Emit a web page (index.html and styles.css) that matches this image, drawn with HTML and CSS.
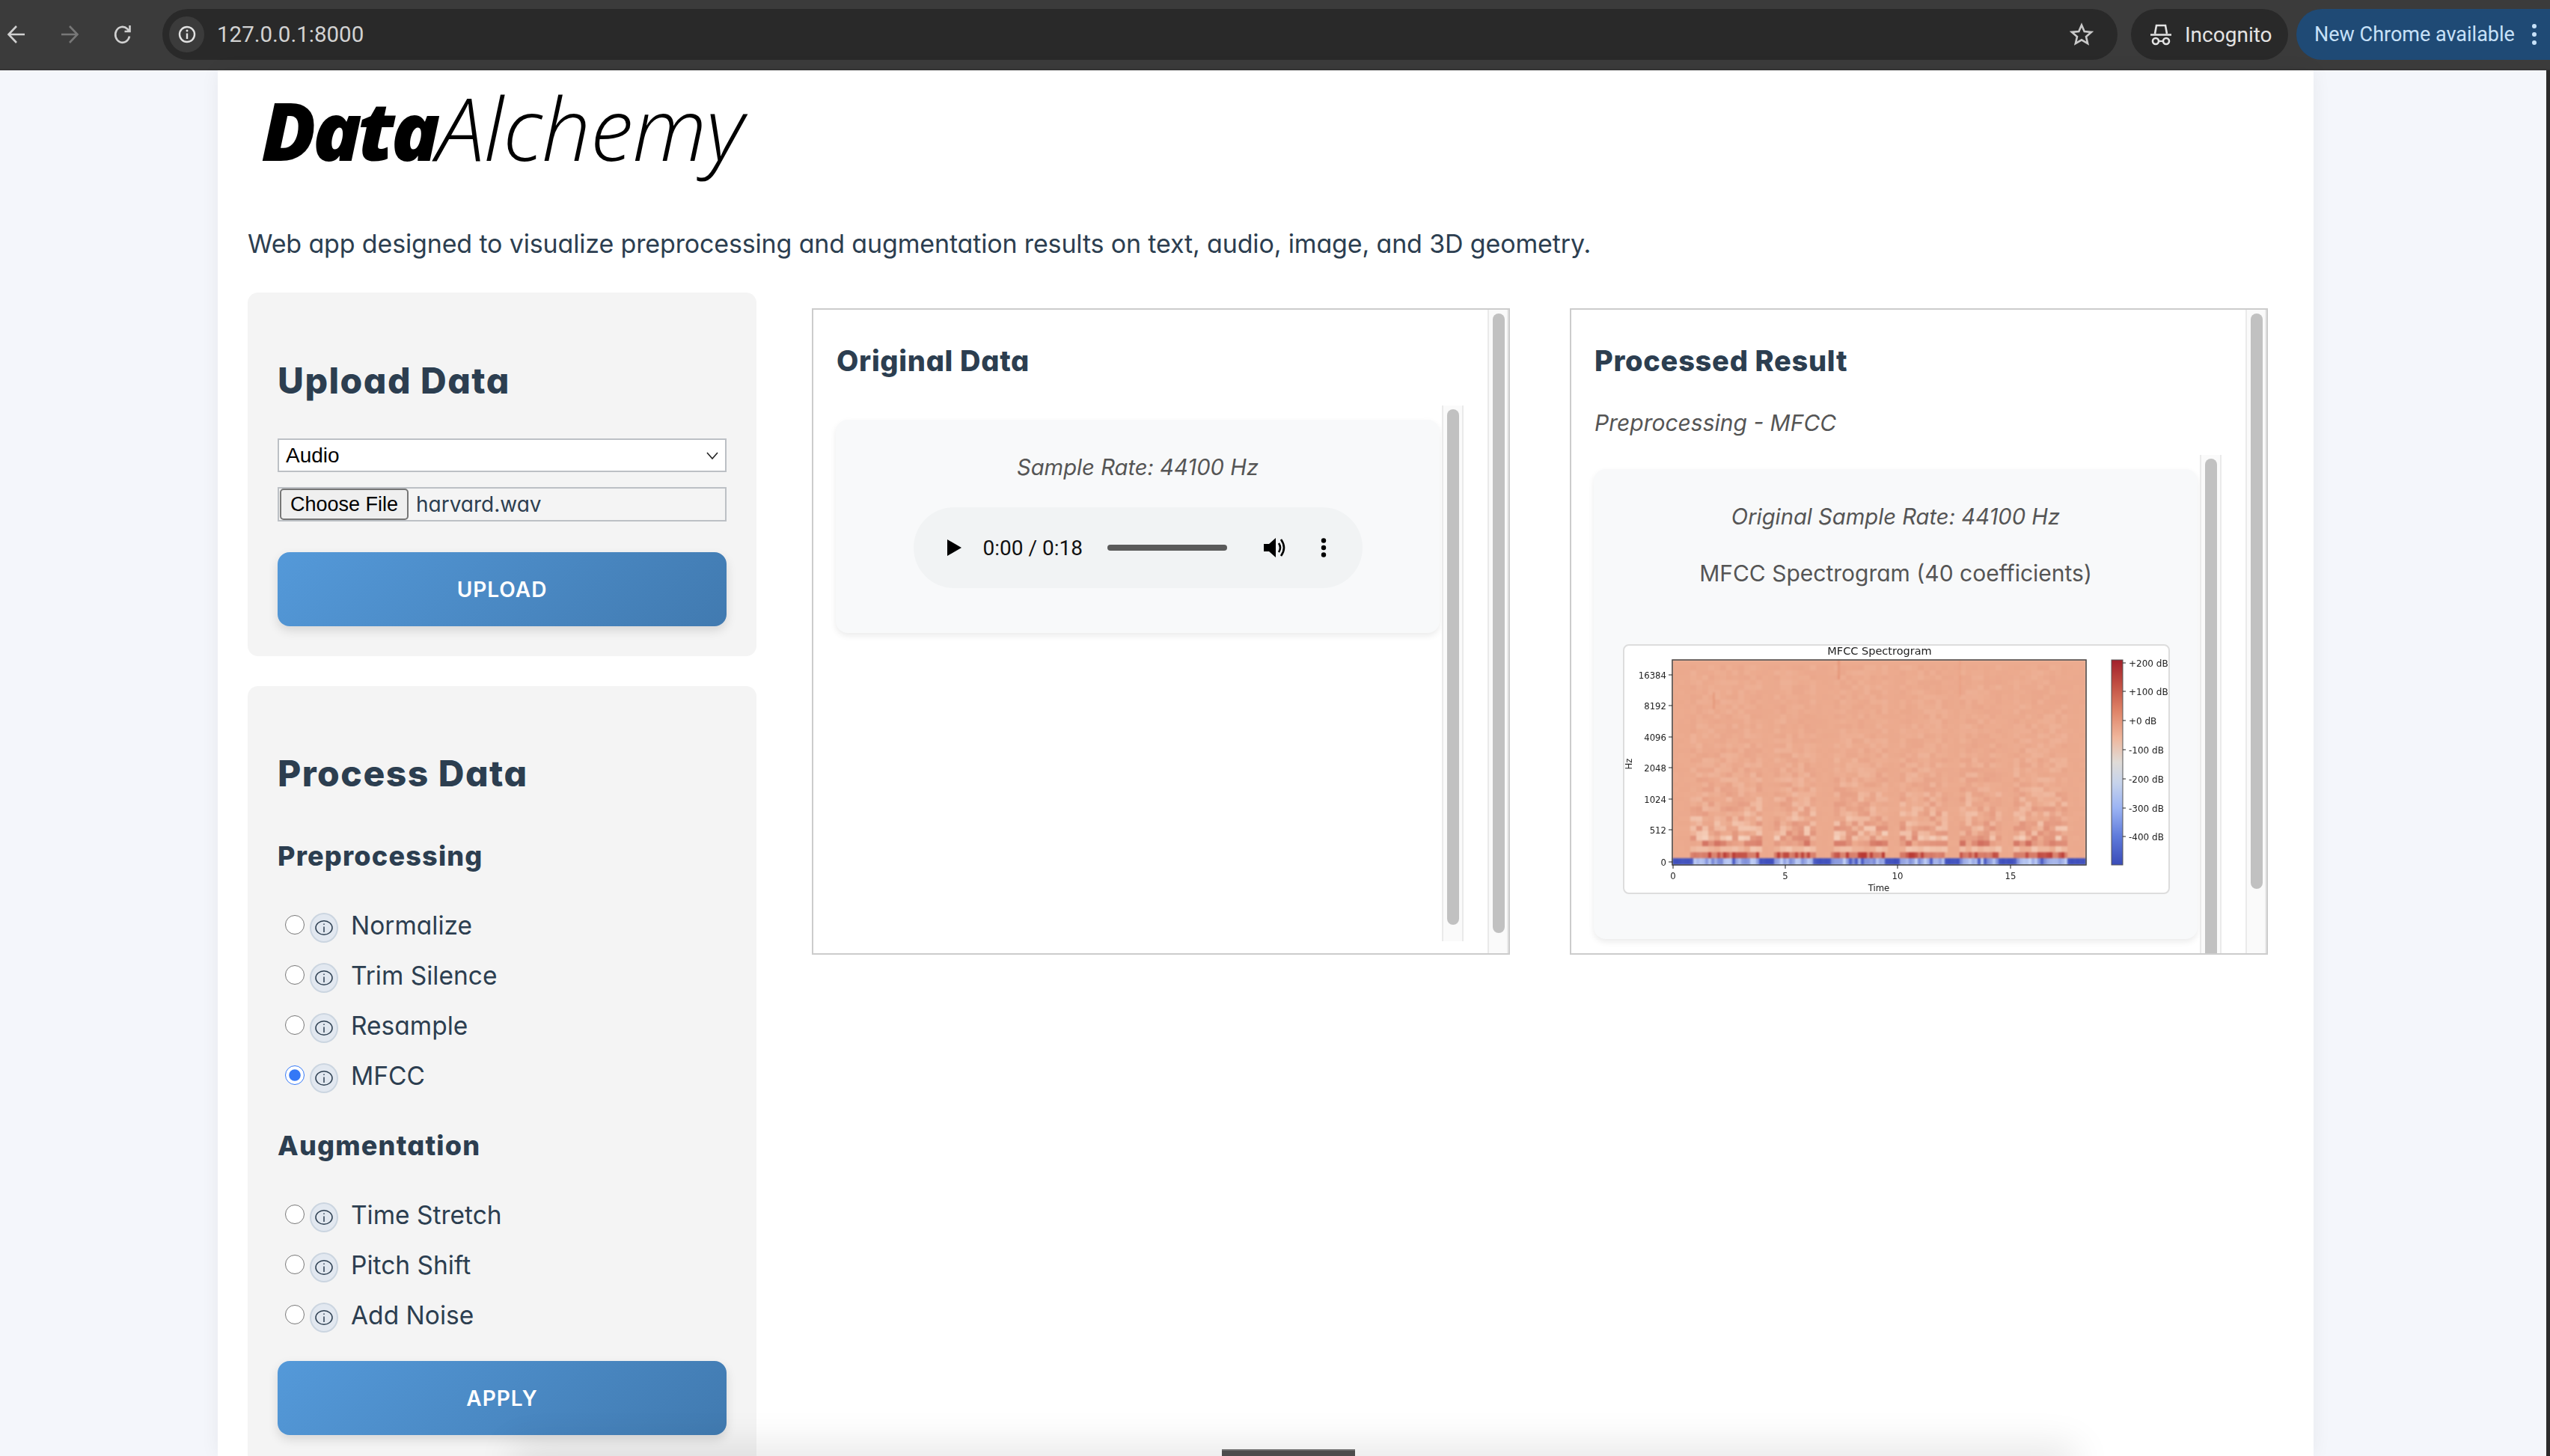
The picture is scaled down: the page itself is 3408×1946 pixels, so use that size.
FILE: index.html
```html
<!DOCTYPE html>
<html lang="en">
<head>
    <meta charset="UTF-8">
    <meta name="viewport" content="width=device-width, initial-scale=1.0">
    <title>DataAlchemy</title>
    <link rel="stylesheet" href="styles.css">
</head>
<body>
    <header class="toolbar">
        <div class="nav-icons">
            <svg class="nav-icon" viewBox="0 0 26 32"><path d="M24 16H3M13 5 2.500 16 13 27" /></svg>
            <svg class="nav-icon dim" viewBox="0 0 26 32"><path d="M2 16h21M13 5l10.500 11L13 27" /></svg>
            <svg class="nav-icon" viewBox="0 0 26 32"><path d="M22 18.500A9.500 10.500 0 1 1 19 8.500l3 3.500M22.500 4v8h-7" /></svg>
        </div>
        <div class="url-pill">
            <span class="site-chip">
                <svg viewBox="0 0 26 26" width="26" height="26"><circle cx="13" cy="13" r="10" fill="none" stroke="#e2e2e2" stroke-width="2.400" /><path d="M13 11.500V19" stroke="#e2e2e2" stroke-width="2.400" /><circle cx="13" cy="8" r="1.500" fill="#e2e2e2" /></svg>
            </span>
            <span class="url-text">127.0.0.1:8000</span>
            <svg class="star" viewBox="0 0 32 32" width="32" height="32"><path d="M16 3.500l3.700 8.600 9.300.8-7 6.100 2.100 9.100-8.100-4.800-8.100 4.800 2.100-9.100-7-6.100 9.300-.8z" fill="none" stroke="#c9c9c9" stroke-width="2.600" /></svg>
        </div>
        <div class="incognito-pill">
            <svg viewBox="0 0 32 32" width="32" height="32"><path d="M8 15 10 4h12l2 11M2 16.500h28" fill="none" stroke="#e3e3e3" stroke-width="2.600" /><circle cx="9" cy="25" r="4" fill="none" stroke="#e3e3e3" stroke-width="2.600" /><circle cx="23" cy="25" r="4" fill="none" stroke="#e3e3e3" stroke-width="2.600" /><path d="M13 25h6" stroke="#e3e3e3" stroke-width="2.200" /></svg>
            <span>Incognito</span>
        </div>
        <div class="update-pill">
            <span>New Chrome available</span>
            <svg viewBox="0 0 8 30" width="8" height="30"><circle cx="4" cy="4" r="3" /><circle cx="4" cy="15" r="3" /><circle cx="4" cy="26" r="3" /></svg>
        </div>
    </header>

    <div class="viewport">
        <main class="container">
            <h1 class="logo"><strong>Data</strong><span>Alchemy</span></h1>
            <p class="intro">Web app designed to visualize preprocessing and augmentation results on text, audio, image, and 3D geometry.</p>

            <div class="layout">
                <aside class="sidebar">
                    <section class="side-card upload-card">
                        <h2>Upload Data</h2>
                        <div class="select-box">
                            <span>Audio</span>
                            <svg viewBox="0 0 16 10" width="16" height="10"><path d="M1 1l7 8 7-8" fill="none" stroke="#222" stroke-width="1.600" /></svg>
                        </div>
                        <div class="file-box">
                            <button type="button" class="file-btn">Choose File</button>
                            <span class="file-name">harvard.wav</span>
                        </div>
                        <button type="button" class="action-btn upload-btn">UPLOAD</button>
                    </section>

                    <section class="side-card process-card">
                        <h2>Process Data</h2>
                        <h3>Preprocessing</h3>
                        <div class="options">
                            <label class="option"><input type="radio" name="op"><span class="info"><svg viewBox="0 0 24 20" width="24" height="20"><ellipse cx="12" cy="10" rx="11" ry="9.200" /><path d="M12 8.500V16M12 4.500v1.500" /></svg></span><span class="opt-label">Normalize</span></label>
                            <label class="option"><input type="radio" name="op"><span class="info"><svg viewBox="0 0 24 20" width="24" height="20"><ellipse cx="12" cy="10" rx="11" ry="9.200" /><path d="M12 8.500V16M12 4.500v1.500" /></svg></span><span class="opt-label">Trim Silence</span></label>
                            <label class="option"><input type="radio" name="op"><span class="info"><svg viewBox="0 0 24 20" width="24" height="20"><ellipse cx="12" cy="10" rx="11" ry="9.200" /><path d="M12 8.500V16M12 4.500v1.500" /></svg></span><span class="opt-label">Resample</span></label>
                            <label class="option"><input type="radio" name="op" checked><span class="info"><svg viewBox="0 0 24 20" width="24" height="20"><ellipse cx="12" cy="10" rx="11" ry="9.200" /><path d="M12 8.500V16M12 4.500v1.500" /></svg></span><span class="opt-label">MFCC</span></label>
                        </div>
                        <h3 class="aug-title">Augmentation</h3>
                        <div class="options">
                            <label class="option"><input type="radio" name="op"><span class="info"><svg viewBox="0 0 24 20" width="24" height="20"><ellipse cx="12" cy="10" rx="11" ry="9.200" /><path d="M12 8.500V16M12 4.500v1.500" /></svg></span><span class="opt-label">Time Stretch</span></label>
                            <label class="option"><input type="radio" name="op"><span class="info"><svg viewBox="0 0 24 20" width="24" height="20"><ellipse cx="12" cy="10" rx="11" ry="9.200" /><path d="M12 8.500V16M12 4.500v1.500" /></svg></span><span class="opt-label">Pitch Shift</span></label>
                            <label class="option"><input type="radio" name="op"><span class="info"><svg viewBox="0 0 24 20" width="24" height="20"><ellipse cx="12" cy="10" rx="11" ry="9.200" /><path d="M12 8.500V16M12 4.500v1.500" /></svg></span><span class="opt-label">Add Noise</span></label>
                        </div>
                        <button type="button" class="action-btn apply-btn">APPLY</button>
                    </section>
                </aside>

                <section class="panels">
                    <div class="panel">
                        <div class="panel-body">
                            <h3 class="panel-title">Original Data</h3>
                            <div class="scroller">
                                <div class="result-card">
                                    <p class="meta">Sample Rate: 44100 Hz</p>
                                    <div class="audio">
                                        <svg class="play" viewBox="0 0 19 22" width="19" height="22"><path d="M0 0l19 11L0 22z" /></svg>
                                        <span class="time">0:00 / 0:18</span>
                                        <span class="progress"></span>
                                        <svg class="volume" viewBox="0 0 31 28" width="31" height="28"><path d="M0 9h7l9-8v26l-9-8H0z" /><path d="M20 8q4 6 0 12M23 3q8 11 0 22" fill="none" stroke="#000" stroke-width="2.600" /></svg>
                                        <svg class="dots" viewBox="0 0 8 26" width="8" height="26"><circle cx="4" cy="3.500" r="3.200" /><circle cx="4" cy="13" r="3.200" /><circle cx="4" cy="22.500" r="3.200" /></svg>
                                    </div>
                                </div>
                                <div class="track inner-track"><div class="thumb thumb-inner-a"></div></div>
                            </div>
                        </div>
                        <div class="track"><div class="thumb thumb-outer-a"></div></div>
                    </div>

                    <div class="panel">
                        <div class="panel-body">
                            <h3 class="panel-title">Processed Result</h3>
                            <p class="sub-title">Preprocessing - MFCC</p>
                            <div class="scroller scroller-result">
                                <div class="result-card">
                                    <p class="meta">Original Sample Rate: 44100 Hz</p>
                                    <p class="meta plain">MFCC Spectrogram (40 coefficients)</p>
                                    <div class="chart">
                                        <canvas id="heatmap" class="heatmap" width="553" height="274"></canvas>
                                        <svg class="chart-axes" viewBox="0 0 727 330" width="727" height="330">
                                            <defs>
                                                <linearGradient id="coolwarm" x1="0" y1="0" x2="0" y2="1">
                                                    <stop offset="0" stop-color="#a2202b" />
                                                    <stop offset="0.12" stop-color="#c14f43" />
                                                    <stop offset="0.25" stop-color="#df8468" />
                                                    <stop offset="0.38" stop-color="#efb69c" />
                                                    <stop offset="0.5" stop-color="#dfdbd7" />
                                                    <stop offset="0.6" stop-color="#c6d3eb" />
                                                    <stop offset="0.72" stop-color="#9cb4f3" />
                                                    <stop offset="0.86" stop-color="#5f7bdb" />
                                                    <stop offset="1" stop-color="#3a4cb8" />
                                                </linearGradient>
                                            </defs>
                                            <rect class="axis-box" x="64" y="19" width="553" height="274" />
                                            <rect x="651" y="19" width="15" height="274" fill="url(#coolwarm)" stroke="#555" />
                                            <path class="ticks" d="M59 39h5M59 80h5M59 122h5M59 163h5M59 205h5M59 246h5M59 289h5M65 293v5M215 293v5M365 293v5M516 293v5M666 23h4M666 61h4M666 100h4M666 139h4M666 178h4M666 217h4M666 255h4" />
                                            <text class="plot-title" x="341" y="12">MFCC Spectrogram</text>
                                            <text class="tick-y" x="56" y="44">16384</text>
                                            <text class="tick-y" x="56" y="85">8192</text>
                                            <text class="tick-y" x="56" y="127">4096</text>
                                            <text class="tick-y" x="56" y="168">2048</text>
                                            <text class="tick-y" x="56" y="210">1024</text>
                                            <text class="tick-y" x="56" y="251">512</text>
                                            <text class="tick-y" x="56" y="294">0</text>
                                            <text class="tick-x" x="65" y="312">0</text>
                                            <text class="tick-x" x="215" y="312">5</text>
                                            <text class="tick-x" x="365" y="312">10</text>
                                            <text class="tick-x" x="516" y="312">15</text>
                                            <text class="tick-x" x="340" y="328">Time</text>
                                            <text class="tick-x" transform="translate(10 158) rotate(-90)">Hz</text>
                                            <text class="tick-bar" x="674" y="28">+200 dB</text>
                                            <text class="tick-bar" x="674" y="66">+100 dB</text>
                                            <text class="tick-bar" x="674" y="105">+0 dB</text>
                                            <text class="tick-bar" x="674" y="144">-100 dB</text>
                                            <text class="tick-bar" x="674" y="183">-200 dB</text>
                                            <text class="tick-bar" x="674" y="222">-300 dB</text>
                                            <text class="tick-bar" x="674" y="260">-400 dB</text>
                                        </svg>
                                    </div>
                                </div>
                                <div class="track inner-track"><div class="thumb thumb-inner-b"></div></div>
                            </div>
                        </div>
                        <div class="track"><div class="thumb thumb-outer-b"></div></div>
                    </div>
                </section>
            </div>
        </main>
        <div class="window-edge"></div>
    </div>

    <div class="bottom-shade"></div>
    <div class="bottom-tab"></div>

    <script src="script.js"></script>
</body>
</html>
```

FILE: styles.css
```css
html, body {
    margin: 0;
    height: 1946px;
    overflow: hidden;
}
body {
    position: relative;
    background: #f4f6fb;
    font-family: Inter, "Liberation Sans", sans-serif;
    font-feature-settings: "cv11";
    color: #2c3e50;
}

/* browser chrome */
.toolbar {
    display: flex;
    height: 94px;
    box-sizing: border-box;
    padding-top: 12px;
    background: #3b3b3b;
    border-bottom: 2px solid #363636;
    font-family: Roboto, sans-serif;
    font-size: 27px;
    font-feature-settings: normal;
}
.nav-icons {
    display: flex;
    align-items: center;
    gap: 45px;
    height: 68px;
    padding-left: 9px;
    margin-right: 40px;
}
.nav-icon {
    width: 26px;
    height: 32px;
    fill: none;
    stroke: #d0d0d0;
    stroke-width: 2.6;
}
.nav-icon.dim {
    stroke: #777;
}
.url-pill {
    flex: 1;
    display: flex;
    align-items: center;
    height: 68px;
    padding: 0 32px 0 9px;
    border-radius: 34px;
    background: #292929;
    color: #d2d2d2;
}
.site-chip {
    display: flex;
    align-items: center;
    justify-content: center;
    width: 47px;
    height: 48px;
    border-radius: 50%;
    background: #3b3b3b;
}
.url-text {
    flex: 1;
    margin-left: 17px;
    font-size: 29.500px;
}
.incognito-pill {
    display: flex;
    align-items: center;
    gap: 16px;
    width: 210px;
    height: 68px;
    box-sizing: border-box;
    margin-left: 18px;
    padding-left: 24px;
    border-radius: 34px;
    background: #292929;
    color: #e3e3e3;
    font-size: 28px;
}
.update-pill {
    display: flex;
    align-items: center;
    gap: 22px;
    width: 339px;
    height: 68px;
    flex: none;
    box-sizing: border-box;
    margin-left: 11px;
    padding-left: 24px;
    border-radius: 34px 0 0 34px;
    background: #1f4a75;
    color: #c7e1f8;
    fill: #c7e1f8;
}

/* page */
.viewport {
    display: flex;
    height: 1852px;
}
.container {
    width: 2801px;
    margin-left: 291px;
    margin-right: 311px;
    padding: 11px 0 0 40px;
    box-sizing: border-box;
    background: #fff;
    box-shadow: 0 0 24px rgba(0, 0, 0, 0.06);
}
.window-edge {
    width: 5px;
    background: #2b2b2b;
}
.logo {
    height: 130px;
    margin: 0;
    padding-left: 18px;
    font-family: "Open Sans", sans-serif;
    font-size: 108px;
    line-height: 130px;
    font-style: italic;
    font-weight: 300;
    color: #000;
    font-feature-settings: normal;
}
.logo strong {
    font-weight: 800;
    letter-spacing: -5px;
}
.logo span {
    font-size: 116px;
    letter-spacing: -0.7px;
}
.intro {
    margin: 66px 0 40px;
    font-size: 34px;
    line-height: 50px;
    letter-spacing: -0.15px;
}
.layout {
    display: flex;
    gap: 74px;
}

/* sidebar */
.sidebar {
    width: 680px;
    flex: none;
}
.side-card {
    padding: 0 40px 40px;
    border-radius: 14px;
    background: #f4f4f4;
}
.upload-card {
    padding-top: 88px;
    margin-bottom: 40px;
}
.process-card {
    padding-top: 87px;
}
.side-card h2 {
    margin: 0;
    font-size: 48px;
    line-height: 60px;
    font-weight: 800;
    letter-spacing: 1.500px;
}
.side-card h3 {
    margin: 58px 0 40px;
    font-size: 36px;
    line-height: 44px;
    font-weight: 800;
    letter-spacing: 1.200px;
}
.side-card .aug-title {
    margin-top: 35px;
}
.select-box {
    display: flex;
    align-items: center;
    justify-content: space-between;
    height: 45px;
    box-sizing: border-box;
    margin-top: 47px;
    padding: 0 9px;
    border: 2px solid #bcc0c5;
    background: #fff;
    color: #000;
    font-family: "Liberation Sans", sans-serif;
    font-size: 28px;
    font-feature-settings: normal;
}
.file-box {
    display: flex;
    align-items: center;
    height: 46px;
    box-sizing: border-box;
    margin-top: 20px;
    padding-left: 1px;
    border: 2px solid #bcc0c5;
}
.file-btn {
    width: 172px;
    height: 42px;
    padding: 0;
    border: 2px solid #767676;
    border-radius: 5px;
    background: #efefef;
    color: #000;
    font-family: "Liberation Sans", sans-serif;
    font-size: 27px;
}
.file-name {
    margin-left: 10px;
    font-size: 28px;
}
.action-btn {
    display: block;
    width: 600px;
    height: 99px;
    padding: 0;
    border: 0;
    border-radius: 16px;
    background: linear-gradient(135deg, #5499d9, #417ab0);
    box-shadow: 0 6px 14px rgba(0, 0, 0, 0.12);
    color: #fff;
    font-family: Inter, sans-serif;
    font-size: 28px;
    font-weight: 600;
    letter-spacing: 1px;
}
.upload-btn {
    margin-top: 41px;
}
.apply-btn {
    margin-top: 25px;
}
.option {
    display: flex;
    align-items: center;
    height: 67px;
    font-size: 33.500px;
}
.option input {
    width: 26px;
    height: 26px;
    margin: 0 7px 8px 10px;
    accent-color: #3478f6;
}
.info {
    display: flex;
    align-items: center;
    justify-content: center;
    width: 38px;
    height: 40px;
    box-sizing: border-box;
    border: 2px solid #cbd5e0;
    border-radius: 50%;
    background: #e2e8f0;
}
.info svg {
    fill: none;
    stroke: #2c3e50;
    stroke-width: 1.5;
}
.opt-label {
    margin: 0 0 6px 17px;
}

/* result panels */
.panels {
    display: flex;
    gap: 80px;
    margin-top: 21px;
}
.panel {
    display: flex;
    width: 933px;
    height: 864px;
    box-sizing: border-box;
    border: 2px solid #ccc;
    overflow: hidden;
}
.panel-body {
    flex: 1;
    min-width: 0;
    padding: 45px 32px 0 30px;
}
.panel-title {
    margin: 0 0 37px 1px;
    font-size: 38px;
    line-height: 46px;
    font-weight: 800;
    letter-spacing: 0.700px;
}
.sub-title {
    margin: 0 0 20px 1px;
    font-size: 30px;
    line-height: 46px;
    font-style: italic;
    color: #555;
}
.scroller {
    display: flex;
    height: 716px;
}
.scroller-result {
    height: 700px;
}
.result-card {
    flex: 1;
    align-self: flex-start;
    margin-top: 19px;
    padding: 41px 0 60px;
    border-radius: 16px;
    background: #f8f9fa;
    box-shadow: 0 4px 8px rgba(0, 0, 0, 0.08);
}
.meta {
    margin: 0;
    font-size: 29.200px;
    line-height: 46px;
    font-style: italic;
    text-align: center;
    color: #555;
}
.meta.plain {
    margin-top: 29px;
    font-size: 30px;
    font-style: normal;
}
.track {
    flex: none;
    width: 28px;
    box-sizing: border-box;
    padding: 5px 5px 0;
    border-left: 2px solid #eaeaea;
    border-right: 2px solid #eaeaea;
    background: #fafafa;
}
.inner-track {
    margin-left: 3px;
    box-sizing: border-box;
    width: 29px;
}
.thumb {
    width: 16px;
    border-radius: 8px;
    background: #c1c1c1;
}
.thumb-outer-a { height: 828px; }
.thumb-outer-b { height: 769px; }
.thumb-inner-a { height: 689px; }
.thumb-inner-b { height: 720px; }
.audio {
    display: flex;
    align-items: center;
    width: 600px;
    height: 108px;
    margin: 30px auto 0;
    border-radius: 54px;
    background: #f1f3f4;
}
.play {
    margin-left: 45px;
}
.time {
    width: 133px;
    margin-left: 29px;
    font-family: Roboto, sans-serif;
    font-size: 28px;
    white-space: nowrap;
    color: #111;
    font-feature-settings: normal;
}
.progress {
    width: 160px;
    height: 8px;
    margin-left: 33px;
    border-radius: 4px;
    background: #5a5a5a;
}
.volume {
    margin-left: 49px;
}
.dots {
    margin-left: 45px;
}
.chart {
    position: relative;
    width: 727px;
    height: 330px;
    margin: 72px 0 0 39px;
    border: 2px solid #ddd;
    border-radius: 8px;
    background: #fff;
    font-feature-settings: normal;
}
.heatmap {
    position: absolute;
    left: 64px;
    top: 19px;
    width: 553px;
    height: 274px;
    filter: blur(0.8px);
}
.chart-axes {
    position: absolute;
    left: 0;
    top: 0;
    overflow: visible;
    font-family: "DejaVu Sans", sans-serif;
}
.axis-box {
    fill: none;
    stroke: #444;
    stroke-width: 1.5;
}
.ticks {
    fill: none;
    stroke: #222;
    stroke-width: 1;
}
.plot-title {
    font-size: 14.500px;
    text-anchor: middle;
    fill: #222;
}
.tick-y {
    font-size: 11.700px;
    text-anchor: end;
    fill: #222;
}
.tick-x {
    font-size: 11.700px;
    text-anchor: middle;
    fill: #222;
}
.tick-bar {
    font-size: 12px;
    fill: #222;
}

/* bits of the desktop peeking in at the bottom */
.bottom-shade {
    position: absolute;
    left: 700px;
    top: 1946px;
    width: 2060px;
    height: 20px;
    box-shadow: 0 0 50px 14px rgba(0, 0, 0, 0.1);
}
.bottom-tab {
    position: absolute;
    left: 1633px;
    top: 1937px;
    width: 178px;
    height: 9px;
    box-sizing: border-box;
    border-top: 2px solid #6c6c6c;
    background: #4c4c4c;
}
```

FILE: script.js
```js
// draws the MFCC heatmap
const canvas = document.getElementById('heatmap');
const ctx = canvas.getContext('2d');

const base = [236, 171, 143];
const light = [246, 212, 192];
const dark = [178, 44, 40];
const silent = [62, 78, 188];
const bright = [198, 213, 248];

// speech segments in canvas pixels
const segments = [[23, 113], [133, 190], [212, 283], [301, 363], [382, 433], [455, 528]];

let seed = 12345;
function rand() {
    seed = (seed * 1103515245 + 12345) % 2147483648;
    return seed / 2147483648;
}

function mix(a, b, t) {
    return 'rgb(' + a.map(function(v, i) {
        return Math.round(v + (b[i] - v) * t);
    }).join(',') + ')';
}

function isActive(x) {
    return segments.some(function(s) {
        return x >= s[0] && x < s[1];
    });
}

function cellColor(row, x) {
    if (!isActive(x)) {
        return row === 0 ? mix(silent, bright, rand() * 0.06) : mix(base, dark, rand() * 0.02);
    }
    const r = rand();
    if (row === 0) return mix(silent, bright, r < 0.18 ? 0.1 : 0.3 + r * 0.7);
    if (row === 1) return r < 0.45 ? mix(base, dark, 0.6 + r * 0.7) : mix(base, dark, 0.2 + r * 0.2);
    if (row === 2) return mix(base, light, r * 0.7);
    if (row === 3) return mix(base, dark, r * 0.5);
    const amp = 0.12 + 0.8 * Math.exp(-(row - 4) / 7);
    return r < 0.5 ? mix(base, light, r * 2 * amp) : mix(base, dark, (r - 0.5) * amp * 0.55);
}

ctx.fillStyle = mix(base, base, 0);
ctx.fillRect(0, 0, 553, 274);

const rowHeights = [9, 8, 8, 8];
while (rowHeights.length < 40) rowHeights.push(6.5);

let y = 274;
rowHeights.forEach(function(h, row) {
    y -= h;
    const step = row < 2 ? 4 : 8;
    for (let x = 0; x < 553; x += step) {
        ctx.fillStyle = cellColor(row, x);
        ctx.fillRect(x, y, step, Math.ceil(h));
    }
});

// faint vertical streaks near the top
[[54, 43, 23, 0.25], [221, 0, 26, 0.3], [383, 0, 50, 0.1]].forEach(function(s) {
    ctx.fillStyle = 'rgba(214, 110, 80, ' + s[3] + ')';
    ctx.fillRect(s[0], s[1], 3, s[2]);
});
```
